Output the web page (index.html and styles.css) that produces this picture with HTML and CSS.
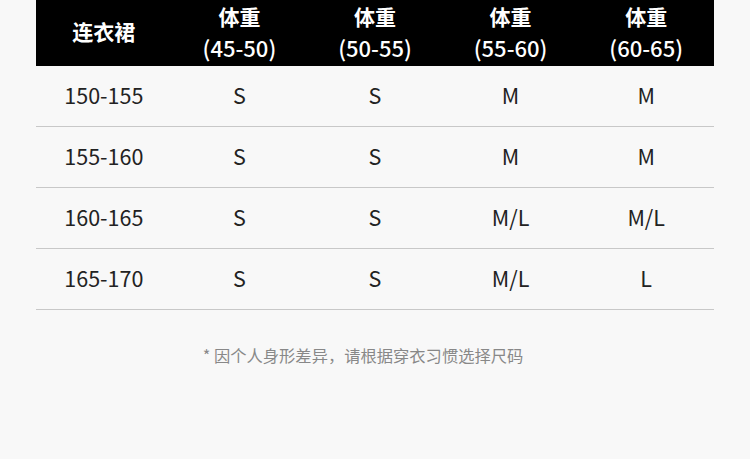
FILE: index.html
```html
<!DOCTYPE html>
<html lang="zh">
<head>
<meta charset="utf-8">
<link rel="stylesheet" href="styles.css">
</head>
<body>
<div class="page">
  <div class="table">
    <div class="row head">
      <div class="cell"><span class="b">连衣裙</span></div>
      <div class="cell"><span class="b">体重</span><span class="sub">(45-50)</span></div>
      <div class="cell"><span class="b">体重</span><span class="sub">(50-55)</span></div>
      <div class="cell"><span class="b">体重</span><span class="sub">(55-60)</span></div>
      <div class="cell"><span class="b">体重</span><span class="sub">(60-65)</span></div>
    </div>
    <div class="row"><div class="cell">150-155</div><div class="cell">S</div><div class="cell">S</div><div class="cell">M</div><div class="cell">M</div></div>
    <div class="row"><div class="cell">155-160</div><div class="cell">S</div><div class="cell">S</div><div class="cell">M</div><div class="cell">M</div></div>
    <div class="row"><div class="cell">160-165</div><div class="cell">S</div><div class="cell">S</div><div class="cell">M/L</div><div class="cell">M/L</div></div>
    <div class="row"><div class="cell">165-170</div><div class="cell">S</div><div class="cell">S</div><div class="cell">M/L</div><div class="cell">L</div></div>
  </div>
  <p class="note">* 因个人身形差异，请根据穿衣习惯选择尺码</p>
</div>
</body>
</html>
```
FILE: styles.css
```css
html, body {
  margin: 0;
  padding: 0;
  background: #f8f8f8;
}
body {
  font-family: "Noto Sans CJK SC", "Noto Sans", sans-serif;
  color: #222;
}
.page {
  padding: 0 36px;
}
.table {
  display: flex;
  flex-direction: column;
}
.row {
  display: grid;
  grid-template-columns: repeat(5, 1fr);
  height: 60px;
  border-bottom: 1px solid #c8c8c8;
  font-size: 21.5px;
}
.row .cell {
  padding-bottom: 3px;
}
.row.head {
  height: 66px;
  background: #000;
  color: #fff;
  border-bottom: none;
}
.cell {
  display: flex;
  flex-direction: column;
  align-items: center;
  justify-content: center;
  line-height: 30px;
}
.row.head .cell {
  padding-bottom: 4px;
}
.b {
  font-weight: 700;
  font-size: 21px;
}
.sub {
  font-size: 22px;
  font-weight: 500;
  margin-top: 1px;
}
.note {
  margin: 32px 0 0;
  padding-right: 24px;
  text-align: center;
  font-size: 16.3px;
  line-height: 26px;
  color: #888;
}
```
